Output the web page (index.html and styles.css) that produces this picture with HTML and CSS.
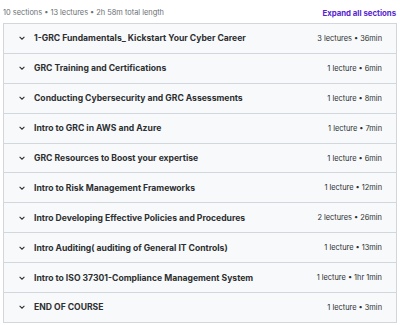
FILE: index.html
```html
<!DOCTYPE html>
<html lang="en">
<head>
  <meta charset="UTF-8">
  <title>Course content</title>
  <link rel="stylesheet" href="styles.css">
</head>
<body>
  <div class="content">
    <div class="summary">
      <span>10 sections • 13 lectures • 2h 58m total length</span>
      <a href="#" class="expand">Expand all sections</a>
    </div>

    <div class="sections">
      <div class="section"><span class="chev"><svg viewBox="0 0 10 10"><path d="M2 3.5 L5 6.5 L8 3.5"/></svg></span><span class="title">1-GRC Fundamentals_ Kickstart Your Cyber Career</span><span class="meta">3 lectures • 36min</span></div>
      <div class="section"><span class="chev"><svg viewBox="0 0 10 10"><path d="M2 3.5 L5 6.5 L8 3.5"/></svg></span><span class="title">GRC Training and Certifications</span><span class="meta">1 lecture • 6min</span></div>
      <div class="section"><span class="chev"><svg viewBox="0 0 10 10"><path d="M2 3.5 L5 6.5 L8 3.5"/></svg></span><span class="title">Conducting Cybersecurity and GRC Assessments</span><span class="meta">1 lecture • 8min</span></div>
      <div class="section"><span class="chev"><svg viewBox="0 0 10 10"><path d="M2 3.5 L5 6.5 L8 3.5"/></svg></span><span class="title">Intro to GRC in AWS and Azure</span><span class="meta">1 lecture • 7min</span></div>
      <div class="section"><span class="chev"><svg viewBox="0 0 10 10"><path d="M2 3.5 L5 6.5 L8 3.5"/></svg></span><span class="title">GRC Resources to Boost your expertise</span><span class="meta">1 lecture • 6min</span></div>
      <div class="section"><span class="chev"><svg viewBox="0 0 10 10"><path d="M2 3.5 L5 6.5 L8 3.5"/></svg></span><span class="title">Intro to Risk Management Frameworks</span><span class="meta">1 lecture • 12min</span></div>
      <div class="section"><span class="chev"><svg viewBox="0 0 10 10"><path d="M2 3.5 L5 6.5 L8 3.5"/></svg></span><span class="title">Intro Developing Effective Policies and Procedures</span><span class="meta">2 lectures • 26min</span></div>
      <div class="section"><span class="chev"><svg viewBox="0 0 10 10"><path d="M2 3.5 L5 6.5 L8 3.5"/></svg></span><span class="title">Intro Auditing( auditing of General IT Controls)</span><span class="meta">1 lecture • 13min</span></div>
      <div class="section"><span class="chev"><svg viewBox="0 0 10 10"><path d="M2 3.5 L5 6.5 L8 3.5"/></svg></span><span class="title">Intro to ISO 37301-Compliance Management System</span><span class="meta">1 lecture • 1hr 1min</span></div>
      <div class="section"><span class="chev"><svg viewBox="0 0 10 10"><path d="M2 3.5 L5 6.5 L8 3.5"/></svg></span><span class="title">END OF COURSE</span><span class="meta">1 lecture • 3min</span></div>
    </div>
  </div>
</body>
</html>
```

FILE: styles.css
```css
body {
  margin: 0;
  font-family: 'Inter', 'Noto Sans', sans-serif;
  background-color: #ffffff;
  color: #2d2f31;
}

.content {
  padding: 5px 3px 0 3px;
}

.summary {
  display: flex;
  justify-content: space-between;
  align-items: center;
  height: 15px;
  font-size: 7.4px;
  color: #6a6f73;
  margin-bottom: 3px;
}

.expand {
  color: #5624d0;
  font-weight: 700;
  font-size: 7.8px;
  text-decoration: none;
  margin-right: 1px;
}

.sections {
  border: 1px solid #d1d7dc;
}

.section {
  display: flex;
  align-items: center;
  height: 28.9px;
  padding: 0 14px 0 14px;
  background-color: #f7f9fa;
  border-bottom: 1px solid #d1d7dc;
}

.section:last-child {
  border-bottom: none;
}

.chev {
  width: 8px;
  height: 8px;
  margin-right: 8px;
  display: flex;
}

.chev svg {
  width: 8px;
  height: 8px;
  fill: none;
  stroke: #2d2f31;
  stroke-width: 1.3;
}

.title {
  flex: 1;
  font-size: 8.6px;
  font-weight: 700;
  white-space: nowrap;
}

.meta {
  font-size: 7.4px;
  color: #2d2f31;
  white-space: nowrap;
}
```
